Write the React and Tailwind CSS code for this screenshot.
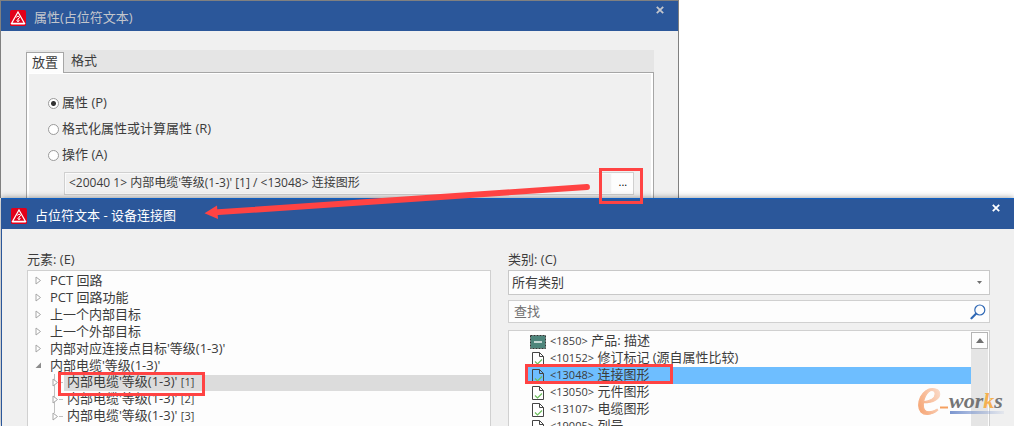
import React from "react";

const FONT = "font-['Open_Sans','Noto_Sans_CJK_SC',sans-serif]";

function Caption({ children, className = "" }) {
  const parts = children.split(/(<\d+>|\[\d\])/);
  return (
    <span className={`pb-0.5 whitespace-nowrap ${className}`}>
      {parts.map((part, i) =>
        i % 2 ? (
          <span key={i} className="text-[11px]">
            {part}
          </span>
        ) : (
          part
        ),
      )}
    </span>
  );
}

function WarningIcon() {
  return (
    <svg viewBox="0 0 16 16" className="size-4 shrink-0" aria-hidden="true">
      <rect width="16" height="16" rx="1.5" fill="#e2001a" />
      <path d="M8 2 14.500 13.400H1.500Z" fill="none" stroke="#fff" strokeWidth="1.2" />
      <path d="M1.200 14h13.600" stroke="#fff" strokeWidth="1" />
      <path
        d="M6.200 7.400 8 6 9.800 7.400 7.600 9.300M8 8.800v2.800M6.600 10.200 8 11.800 9.400 10.200"
        fill="none"
        stroke="#fff"
        strokeWidth="1"
      />
    </svg>
  );
}

function CloseButton() {
  return (
    <button type="button" aria-label="关闭" className="-mt-4 flex size-4 items-center justify-center">
      <svg viewBox="0 0 8 8" className="size-2" aria-hidden="true">
        <path d="M.8 .8 7.200 7.200M7.200 .8 .8 7.200" stroke="currentColor" strokeWidth="1.8" />
      </svg>
    </button>
  );
}

function RadioOption({ label, defaultChecked }) {
  return (
    <label className="flex h-[26px] items-center gap-[3px]">
      <input
        type="radio"
        name="mode"
        defaultChecked={defaultChecked}
        className="size-[11px] appearance-none rounded-full border border-[#9a9a9a] bg-white checked:bg-[radial-gradient(circle,#333_0_2px,#fff_3px)]"
      />
      <Caption>{label}</Caption>
    </label>
  );
}

function Expander({ open }) {
  return (
    <svg viewBox="0 0 7 9" className="h-[9px] w-[7px] shrink-0" aria-hidden="true">
      {open ? (
        <path d="M6 1.500V7H.5Z" fill="#8c8c8c" />
      ) : (
        <path d="M1 1 5.500 4.500 1 8Z" fill="#fff" stroke="#a6a6a6" />
      )}
    </svg>
  );
}

const ROOTS = [
  "PCT 回路",
  "PCT 回路功能",
  "上一个内部目标",
  "上一个外部目标",
  "内部对应连接点目标'等级(1-3)'",
];
const CHILDREN = ["内部电缆'等级(1-3)' [1]", "内部电缆'等级(1-3)' [2]", "内部电缆'等级(1-3)' [3]"];

function ElementTree() {
  return (
    <ul role="tree" aria-labelledby="elements" className="flex-1 overflow-hidden border border-b-0 border-[#d0d0d0] bg-[#fdfdfd] pt-px">
      {ROOTS.map((name) => (
        <li key={name} role="treeitem" className="flex h-[17px] items-center gap-2 pl-[7px]">
          <Expander />
          <Caption>{name}</Caption>
        </li>
      ))}
      <li role="treeitem" aria-expanded="true">
        <div className="flex h-[17px] items-center gap-2 pl-[7px]">
          <Expander open />
          <Caption>内部电缆'等级(1-3)'</Caption>
        </div>
        <ul role="group">
          {CHILDREN.map((name, i) => (
            <li key={name} role="treeitem" className="flex h-[17px] items-center pl-6">
              <svg viewBox="0 0 12 17" className="h-[17px] w-3 shrink-0" aria-hidden="true">
                <path d={i === 2 ? "M2.500 0V5M7 8.500h4" : "M2.500 0V17M7 8.500h4"} stroke="#c0c0c0" />
                <path d="M1 5 5.500 8.500 1 12Z" fill="#fff" stroke="#a6a6a6" />
              </svg>
              <div className={`flex h-4 flex-1 items-center pl-[3px] ${i === 0 ? "bg-[#dcdcdc]" : ""}`}>
                <Caption>{name}</Caption>
              </div>
            </li>
          ))}
        </ul>
      </li>
    </ul>
  );
}

function DocumentIcon({ selected }) {
  return (
    <svg viewBox="0 0 16 16" className="size-4 shrink-0" aria-hidden="true">
      <path d="M2.500 1.500H9.500L13.500 5.500V14.500H2.500Z" fill={selected ? "#6ebeff" : "#fff"} stroke="#444" />
      <path d="M9.500 1.500V5.500H13.500" fill="none" stroke="#444" />
      <path d="M5 10.500 7.500 13 12 8.500" fill="none" stroke="#6cbf5c" strokeWidth="1.2" />
    </svg>
  );
}

function ProductIcon() {
  return (
    <svg viewBox="0 0 16 14" className="h-3.5 w-4 shrink-0" aria-hidden="true">
      <rect x=".5" y=".5" width="15" height="13" fill="#4d857b" stroke="#333" strokeDasharray="2 1" />
      <path d="M4 7h8" stroke="#c4d8d4" strokeWidth="2" />
    </svg>
  );
}

const PROPERTIES = [
  "<1850> 产品: 描述",
  "<10152> 修订标记 (源自属性比较)",
  "<13048> 连接图形",
  "<13050> 元件图形",
  "<13107> 电缆图形",
  "<19005> 列号",
];

function PropertyList() {
  return (
    <div className="flex min-h-0 flex-1 border border-b-0 border-[#d0d0d0] bg-[#fdfdfd] pr-px">
      <ul role="listbox" aria-label="属性" className="flex-1 overflow-hidden pt-0.5 pl-[18px]">
        {PROPERTIES.map((name, i) => (
          <li
            key={name}
            role="option"
            aria-selected={i === 2}
            className={`flex h-[17px] items-center gap-1 pl-[3px] ${i === 2 ? "bg-[#6ebeff]" : ""}`}
          >
            {i === 0 ? <ProductIcon /> : <DocumentIcon selected={i === 2} />}
            <Caption>{name}</Caption>
          </li>
        ))}
      </ul>
      <div className="mt-px w-[17px] bg-[#e5e5e5]">
        <button type="button" aria-label="向上滚动" className="flex h-[17px] w-full items-center justify-center border border-[#b4b4b4] bg-[#fdfdfd]">
          <svg viewBox="0 0 8 5" className="h-[5px] w-2" aria-hidden="true">
            <path d="M4 0 8 5H0Z" fill="#707070" />
          </svg>
        </button>
      </div>
    </div>
  );
}

function Watermark() {
  return (
    <svg viewBox="0 0 96 40" className="absolute right-0 bottom-0 h-10 w-24 overflow-visible" role="img" aria-label="e-works">
      <defs>
        <linearGradient id="swoosh" x1="1" y1="0" x2="0" y2="1">
          <stop offset="0.2" stopColor="#fbdccb" />
          <stop offset="0.9" stopColor="#f5a06c" />
        </linearGradient>
        <linearGradient id="rule">
          <stop offset="0" stopColor="#7b96cf" />
          <stop offset="1" stopColor="#7b96cf" stopOpacity="0.1" />
        </linearGradient>
      </defs>
      <text x="-1" y="28" fontSize="54" fontStyle="italic" fontFamily="Liberation Serif, serif" fill="url(#swoosh)" stroke="url(#swoosh)">e</text>
      <path d="M22 21.500h8" stroke="#f5a060" strokeWidth="2" />
      <text x="31" y="22" fontSize="22" fontStyle="italic" fontWeight="700" fontFamily="Liberation Serif, serif" fill="#757575">
        wor<tspan fill="#f5b050">k</tspan>s
      </text>
      <rect x="32" y="25" width="54" height="3" fill="url(#rule)" />
    </svg>
  );
}

function Annotations() {
  return (
    <div className="pointer-events-none" aria-hidden="true">
      <div className="absolute top-[168px] left-[599px] h-9 w-11 border-3 border-[#ff4343]" />
      <div className="absolute top-[372px] left-[58px] h-6 w-[147px] border-3 border-[#ff4343]" />
      <div className="absolute top-[364px] left-[525px] h-5 w-[148px] border-3 border-[#ff4343]" />
      <svg viewBox="0 0 390 40" className="absolute top-[180px] left-[203px] h-10 w-[390px]">
        <path d="M15 32.200 384 7" stroke="#ff4343" strokeWidth="5.8" strokeLinecap="round" />
        <path d="M1.500 33.200 14 25.500 15 39Z" fill="#ff4343" />
      </svg>
    </div>
  );
}

export default function App() {
  return (
    <div className={`relative flex h-screen flex-col overflow-hidden bg-white text-[13px] leading-4 text-[#3c3c3c] ${FONT}`}>
      <section className="flex h-[198px] w-[67%] shrink-0 flex-col border border-b-0 border-[#808080] bg-[#f0f0f0]">
        <header className="flex h-[30px] shrink-0 items-center gap-2 bg-[#2b579a] pt-1 pr-2.5 pl-[9px] text-[#c3c6cc]">
          <WarningIcon />
          <h1 className="flex flex-1">
            <Caption>属性(占位符文本)</Caption>
          </h1>
          <CloseButton />
        </header>
        <div className="mt-[19px] mr-6 ml-[25px] flex min-h-0 flex-1 flex-col">
          <div role="tablist" className="flex h-[22px] shrink-0 items-end bg-[#e5e5e5]">
            <button type="button" role="tab" aria-selected="true" className="relative z-10 -mb-px h-[21px] border border-b-0 border-[#a6a6a6] bg-[#fdfdfd] px-[5px] pb-0.5">
              放置
            </button>
            <button type="button" role="tab" aria-selected="false" className="h-[22px] px-[7px] pb-0.5">
              格式
            </button>
          </div>
          <div className="flex-1 border border-b-0 border-[#a6a6a6]">
            <div className="flex h-full flex-col border-2 border-t border-b-0 border-white pt-4 pr-[17px] pl-[19px]">
              <RadioOption label="属性 (P)" defaultChecked />
              <RadioOption label="格式化属性或计算属性 (R)" />
              <RadioOption label="操作 (A)" />
              <div className="mt-1 ml-4 flex h-[23px] border border-[#d0d0d0]">
                <input
                  aria-label="操作"
                  readOnly
                  defaultValue="<20040 1> 内部电缆'等级(1-3)' [1] / <13048> 连接图形"
                  className="min-w-0 flex-1 border border-[#fafafa] bg-transparent px-[3px] pb-0.5 text-xs outline-none"
                />
                <button type="button" aria-label="浏览" className="w-[21px] bg-[#fdfdfd] pb-1 text-[11px] text-black">
                  ...
                </button>
              </div>
            </div>
          </div>
        </div>
      </section>

      <section className="ml-px flex min-h-0 flex-1 flex-col border-l border-[#2b579a] bg-[#f0f0f0] shadow-[0_0_6px_rgba(0,0,0,0.45)]">
        <header className="flex h-[31px] shrink-0 items-center gap-2 border-t border-[#0f5fc2] bg-[#2b579a] pt-1 pr-2.5 pl-[9px] text-white">
          <WarningIcon />
          <h2 className="flex flex-1">
            <Caption>占位符文本 - 设备连接图</Caption>
          </h2>
          <CloseButton />
        </header>
        <div className="flex min-h-0 flex-1 gap-[17px] pt-[22px] pr-6 pl-[25px]">
          <div className="flex min-w-0 flex-[464] flex-col">
            <h3 id="elements" className="mb-[3px]">元素: (E)</h3>
            <ElementTree />
          </div>
          <div className="flex min-w-0 flex-[482] flex-col">
            <label htmlFor="category" className="mb-[3px]">类别: (C)</label>
            <div className="grid h-[25px] shrink-0 items-center border border-[#c8c8c8] bg-[#fdfdfd]">
              <select id="category" className="col-start-1 row-start-1 h-full appearance-none px-[3px] pb-0.5 outline-none">
                <option>所有类别</option>
              </select>
              <svg viewBox="0 0 5 3" className="pointer-events-none col-start-1 row-start-1 mr-[7px] h-[3px] w-[5px] justify-self-end" aria-hidden="true">
                <path d="M0 0H5L2.500 3Z" fill="#707070" />
              </svg>
            </div>
            <div className="mt-[5px] mb-[7px] flex h-[23px] shrink-0 items-center border border-[#d0d0d0] bg-[#fdfdfd] pr-[3px]">
              <input aria-label="查找" placeholder="查找" className="h-full min-w-0 flex-1 px-[5px] pb-0.5 outline-none placeholder:text-[#707070]" />
              <button type="button" aria-label="搜索">
                <svg viewBox="0 0 16 16" className="size-4" aria-hidden="true">
                  <circle cx="9.800" cy="6" r="5" fill="none" stroke="#2f68b5" strokeWidth="1.2" />
                  <path d="M6 9.800 1.500 14.300" stroke="#2f68b5" strokeWidth="2.2" strokeLinecap="round" />
                </svg>
              </button>
            </div>
            <PropertyList />
          </div>
        </div>
      </section>
      <Annotations />
      <Watermark />
    </div>
  );
}
